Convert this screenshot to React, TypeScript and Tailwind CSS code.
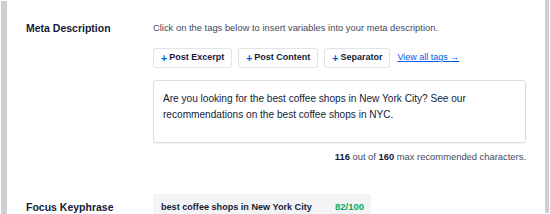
import React from "react";

export default function App() {
  const font = { fontFamily: "'Liberation Sans', Arial, sans-serif" };
  return (
    <div className="w-[550px] h-[214px] bg-white overflow-hidden flex" style={font}>
      <div className="w-[1px] bg-white" />
      <div className="w-[6px] h-[213px] mt-[1px] bg-[#cfcfcf]" />
      <div className="w-[538px] h-[212px] mt-[1px] flex flex-col px-[14px]">
        <div className="h-[2px] mt-[3px] bg-[#f1f1f3]" />
        <div className="flex pl-[5px]">
          <div className="w-[127px] pt-[16px] text-[10.5px] font-bold text-[#141b38] leading-[16px]">
            Meta Description
          </div>
          <div className="flex flex-col w-[373px]">
            <div className="pt-[17px] text-[9.4px] text-[#434960] leading-[14px]">
              Click on the tags below to insert variables into your meta description.
            </div>
            <div className="flex items-center gap-[6px] mt-[13px]">
              {["Post Excerpt", "Post Content", "Separator"].map((t) => (
                <div
                  key={t}
                  className="h-[20px] px-[7px] flex items-center border border-[#e2e3e7] rounded-[3px] bg-white text-[9px] font-bold text-[#141b38]"
                >
                  <span className="text-[#005ae0] mr-[2px] text-[10.5px] leading-[11px]">+</span>
                  {t}
                </div>
              ))}
              <span className="text-[9px] text-[#005ae0] underline ml-[1px]">View all tags →</span>
            </div>
            <div className="mt-[12px] h-[63px] border border-[#dcdde1] rounded-[3px] shadow-[0_1px_1px_rgba(0,0,0,0.05)] px-[9px] pt-[10px] text-[10.1px] leading-[16px] text-[#141b38]">
              Are you looking for the best coffee shops in New York City? See our recommendations on the best coffee shops in NYC.
            </div>
            <div className="mt-[7px] text-right text-[9.4px] leading-[14px] text-[#434960]">
              <span className="font-bold text-[#141b38]">116</span> out of{" "}
              <span className="font-bold text-[#141b38]">160</span> max recommended characters.
            </div>
          </div>
        </div>
        <div className="h-[2px] mt-[16px] bg-[#f1f1f3]" />
        <div className="flex pl-[5px]">
          <div className="w-[127px] pt-[19px] text-[10.5px] font-bold text-[#141b38] leading-[16px]">
            Focus Keyphrase
          </div>
          <div className="mt-[14px] w-[218px] h-[30px] bg-[#f3f4f5] flex justify-between px-[8px] pt-[6px] text-[9.1px] font-bold leading-[14px]">
            <span className="text-[#141b38]">best coffee shops in New York City</span>
            <span className="text-[#00aa63] text-[9.5px] mr-[-1px]">82/100</span>
          </div>
        </div>
      </div>
      <div className="w-[4px] h-[213px] bg-[#cfcfcf]" />
      <div className="w-[1px] bg-white" />
    </div>
  );
}
